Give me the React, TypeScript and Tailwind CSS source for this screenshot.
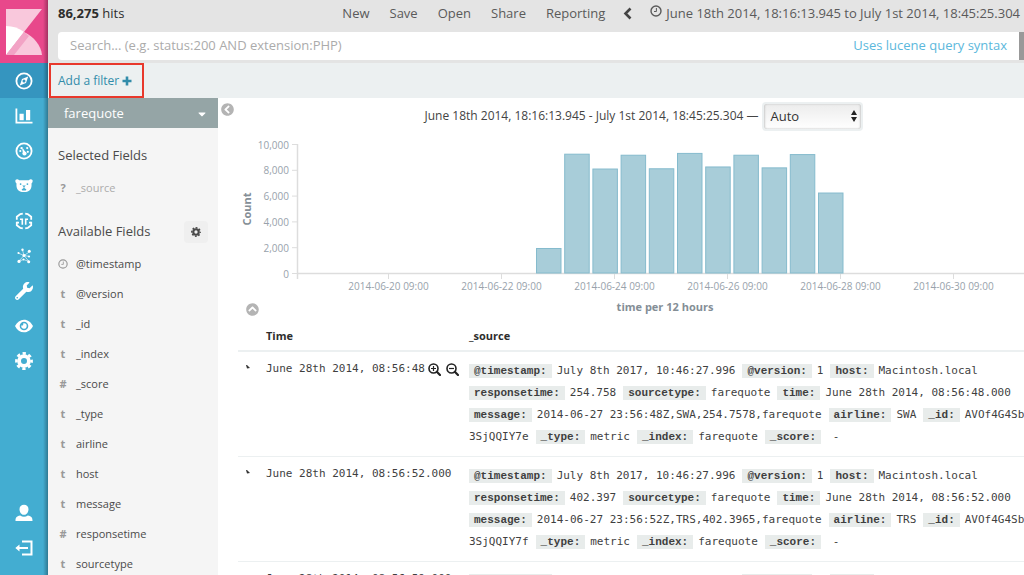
import type { ReactNode } from "react";
import { FaCaretDown, FaChevronCircleLeft, FaChevronCircleUp, FaSearch, FaWrench } from "react-icons/fa";

function Gear({ className }: { className: string }) {
  return (
    <svg viewBox="0 0 18 18" className={className} fill="none" stroke="currentColor">
      <circle cx="9" cy="9" r="4.900" strokeWidth="3.800" />
      <circle cx="9" cy="9" r="7.600" strokeWidth="2.600" strokeDasharray="3.300 2.669" strokeDashoffset="1.650" />
    </svg>
  );
}

const navItems: { label: string; icon: ReactNode }[] = [
  {
    label: "Discover",
    icon: (
      <>
        <circle cx="9" cy="9" r="7.600" fill="none" stroke="currentColor" strokeWidth="1.800" />
        <path fillRule="evenodd" d="M13.200 4.600 11 11l-6.200 2.400L7 7.100zM9 7.600a1.500 1.500 0 1 0 0 3 1.500 1.500 0 0 0 0-3z" />
      </>
    ),
  },
  {
    label: "Visualize",
    icon: <path d="M.5 1.500h1.800v13.200H17.500v1.800H.5zM4.500 6.800h4.200v6.400H4.500zM11 3h4.200v10.200H11z" />,
  },
  {
    label: "Dashboard",
    icon: (
      <>
        <circle cx="9" cy="9" r="7.600" fill="none" stroke="currentColor" strokeWidth="1.800" />
        <circle cx="5.300" cy="9" r="1.100" />
        <circle cx="6.600" cy="6.100" r="1.200" />
        <circle cx="12.200" cy="6.100" r="1.100" />
        <circle cx="12.800" cy="9.800" r="1.100" />
        <circle cx="9.500" cy="11.500" r="2.100" />
        <path d="m8 11.500-.8-4.500 1-.2 2.600 4z" />
      </>
    ),
  },
  {
    label: "Timelion",
    icon: (
      <path
        fillRule="evenodd"
        d="M.5 3c1-.9 2.500-.9 3.700.2h9.600c1.200-1.100 2.700-1.100 3.700-.2.400 1.400 0 2.600-1 3.400.5 5-1.500 8.600-7.500 8.600S1 11.400 1.500 6.400C.5 5.600.1 4.400.5 3zM5.600 6.200a.9.900 0 1 0 0 1.800.9.900 0 0 0 0-1.800zm6.800 0a.9.900 0 1 0 0 1.800.9.900 0 0 0 0-1.800zM7.200 8.600 8.600 10v1l-2 1.500.7.900h3.400l.7-.9-2-1.500v-1l1.400-1.400z"
      />
    ),
  },
  {
    label: "Machine Learning",
    icon: (
      <g fill="none" stroke="currentColor" strokeWidth="1.800">
        <path d="M7.800 1.600 5.300 2 1.800 4.800v3M1.800 9.800v3.400L5.300 16l2.500.4M10.200 1.600l2.500.4 3.500 2.800v3M16.200 9.800v3.400L12.700 16l-2.500.4" />
        <path d="M7.300 12.800V6.500M7.500 7.300H5M10.700 12.800V6.500M10.500 7.300H13M1.800 10.600H4M16.200 10.600H14" strokeWidth="1.600" />
      </g>
    ),
  },
  {
    label: "Graph",
    icon: (
      <>
        <path d="M7.500 3 9 8.500l6-4M9 8.500l5.500 1M9 8.500 3 6M9 8.500l-5.500 6M9 8.500l5 6M3.500 14.500l5-2 5.500 2" fill="none" stroke="currentColor" strokeWidth=".6" />
        <circle cx="7.500" cy="2.800" r="1.200" />
        <circle cx="9" cy="8.500" r="1.500" />
        <circle cx="14.300" cy="4.300" r="1.500" />
        <circle cx="3.500" cy="6" r="1.100" />
        <circle cx="14" cy="9.500" r="1.100" />
        <circle cx="4" cy="14.400" r="1.600" />
        <circle cx="8.500" cy="12.500" r="1" />
        <circle cx="13.700" cy="14.700" r="1.500" />
      </>
    ),
  },
  { label: "Dev Tools", icon: <FaWrench size={18} /> },
  {
    label: "Monitoring",
    icon: (
      <path
        fillRule="evenodd"
        d="M0 9c2-4 5.200-6.300 9-6.300S16 5 18 9c-2 4-5.200 6.300-9 6.300S2 13 0 9zm9-4.300a4.300 4.300 0 1 0 0 8.600 4.300 4.300 0 0 0 0-8.600zm0 1.600a2.700 2.700 0 1 1-2.600 2c.8.700 2.200.1 1.800-1.900.3-.1.500-.1.800-.1z"
      />
    ),
  },
  { label: "Management", icon: <Gear className="size-[18px]" /> },
];

const accountItems: { label: string; icon: ReactNode }[] = [
  {
    label: "Account",
    icon: (
      <path d="M9 .8c2.700 0 4.500 1.700 4.500 4.400 0 2.900-1.800 5.600-4.500 5.600S4.500 8.100 4.500 5.200C4.500 2.500 6.300.8 9 .8zM.5 17c0-3.700.8-4.700 4.700-5.600 2.300 1.700 5.300 1.700 7.600 0 3.900.9 4.700 1.900 4.700 5.600z" />
    ),
  },
  {
    label: "Logout",
    icon: <path d="M7 1.500h10.500v15H7v-2h8.500v-11H7zM4.500 5.500V8H13v2H4.500v2.500L.3 9z" />,
  },
];

const menu = ["New", "Save", "Open", "Share", "Reporting"];

const fields = [
  { type: "clock", name: "@timestamp" },
  { type: "t", name: "@version" },
  { type: "t", name: "_id" },
  { type: "t", name: "_index" },
  { type: "#", name: "_score" },
  { type: "t", name: "_type" },
  { type: "t", name: "airline" },
  { type: "t", name: "host" },
  { type: "t", name: "message" },
  { type: "#", name: "responsetime" },
  { type: "t", name: "sourcetype" },
];

const counts = [1900, 9210, 8060, 9130, 8080, 9270, 8220, 9130, 8150, 9180, 6200];
const yTicks = [0, 2000, 4000, 6000, 8000, 10000];
const xTicks = ["06-20", "06-22", "06-24", "06-26", "06-28", "06-30"];

const hits = [
  { time: "08:56:48", gmt: "23:56:48Z", response: "254.758", value: "254.7578", airline: "SWA", id: "3SjQQIY7e", active: true },
  { time: "08:56:52", gmt: "23:56:52Z", response: "402.397", value: "402.3965", airline: "TRS", id: "3SjQQIY7f", active: false },
  { time: "08:56:59", gmt: "23:56:59Z", response: "118.204", value: "118.2041", airline: "SWA", id: "3SjQQIY7g", active: false },
];

function Clock({ className }: { className: string }) {
  return (
    <svg viewBox="0 0 12 12" className={className} fill="none" stroke="currentColor">
      <circle cx="6" cy="6" r="5" strokeWidth="1.400" />
      <path d="M6.400 3v3.500H4" strokeWidth="1" />
    </svg>
  );
}

function Magnifier({ plus }: { plus?: boolean }) {
  return (
    <svg viewBox="0 0 13 13" className="size-[13px]" fill="none" stroke="currentColor">
      <circle cx="5.500" cy="5.500" r="4.500" strokeWidth="1.600" />
      <path d="m8.800 8.800 3.200 3.200" strokeWidth="2.200" strokeLinecap="round" />
      <path d={plus ? "M3 5.500h5M5.500 3v5" : "M3 5.500h5"} strokeWidth="1.200" />
    </svg>
  );
}

function NavButton({ label, icon, active }: { label: string; icon: ReactNode; active?: boolean }) {
  return (
    <a
      href="#"
      aria-label={label}
      className={`flex h-[35px] items-center justify-center text-white ${active ? "bg-[#3595bf]" : ""}`}
    >
      <svg viewBox="0 0 18 18" className="size-[18px]" fill="currentColor">
        {icon}
      </svg>
    </a>
  );
}

function SideNav() {
  return (
    <nav className="relative flex w-12 shrink-0 flex-col bg-[#43add1]">
      <a href="#" aria-label="Kibana" className="flex h-[63px] items-center justify-center bg-[#e8488b]">
        <svg viewBox="0 0 36 46" className="h-[46px] w-9">
          <path d="M0 0h36L0 46z" fill="#f9c8dc" />
          <path d="M0 17c7 0 13 2 18 6L0 46z" fill="#fff" />
          <path d="M18 23c10 5 17 13 18 23H0z" fill="#f9c8dc" />
          <path d="m18 23 5 4L8 46H0z" fill="#f2a3c5" />
        </svg>
      </a>
      {navItems.map((item, i) => (
        <NavButton key={item.label} {...item} active={i === 0} />
      ))}
      <div className="mt-auto pb-[10px]">
        {accountItems.map((item) => (
          <NavButton key={item.label} {...item} />
        ))}
      </div>
      <div className="pointer-events-none absolute inset-y-0 right-0 w-[5px] bg-linear-to-r from-transparent to-black/30" />
    </nav>
  );
}

function TopBar() {
  return (
    <header className="bg-[#e4e4e4] px-[10px] pb-[3px] text-[13px]">
      <div className="flex h-8 items-center justify-between pb-[5px] text-[#5a5a5a]">
        <div className="text-[#2d2d2d]">
          <strong className="font-bold">86,275</strong> hits
        </div>
        <div className="flex items-center pr-5">
          <div className="flex gap-5">
            {menu.map((item) => (
              <button key={item} type="button">
                {item}
              </button>
            ))}
          </div>
          <button type="button" aria-label="Previous period" className="px-[18px]">
            <svg viewBox="0 0 9 13" className="h-[13px] w-[9px]" fill="none" stroke="#444" strokeWidth="2.600">
              <path d="M7.500 1.500 2.500 6.500l5 5" />
            </svg>
          </button>
          <button type="button" className="flex items-center gap-1">
            <Clock className="mb-1.5 size-3" />
            June 18th 2014, 18:16:13.945 to July 1st 2014, 18:45:25.304
          </button>
        </div>
      </div>
      <form className="flex h-7">
        <div className="flex flex-1 items-center rounded-l bg-white px-3">
          <input
            aria-label="Search"
            placeholder="Search... (e.g. status:200 AND extension:PHP)"
            className="min-w-0 flex-1 outline-none placeholder:text-[#ababab]"
          />
          <a href="#" className="text-[#5bb8dc]">
            Uses lucene query syntax
          </a>
        </div>
        <button type="button" aria-label="Run search" className="flex w-[21px] items-center justify-center bg-[#999] text-white">
          <FaSearch size={10} />
        </button>
      </form>
    </header>
  );
}

function FieldSidebar() {
  return (
    <aside className="w-[170px] shrink-0 bg-[#f5f5f5] text-[#4a4a4a]">
      <button type="button" className="flex h-[30px] w-full items-center justify-between bg-[#95a5a6] pt-[2px] pr-[10px] pl-4 text-[13px] text-white">
        farequote
        <FaCaretDown size={12} />
      </button>
      <h2 className="mt-[17px] pl-[10px] text-[13px] leading-5">Selected Fields</h2>
      <div className="mt-[13px] flex h-[21px] items-center pl-[10px] text-[11px] text-[#acacac]">
        <span className="w-[10px] text-center font-bold text-[#999]">?</span>
        <span className="ml-2">_source</span>
      </div>
      <div className="mt-[22px] flex items-start justify-between pr-[10px] pl-[10px]">
        <h2 className="text-[13px] leading-5">Available Fields</h2>
        <button type="button" aria-label="Field settings" className="flex h-[22px] w-6 items-center justify-center rounded bg-[#efefef]">
          <Gear className="size-[10px]" />
        </button>
      </div>
      <ul className="mt-[6px] text-[11px]">
        {fields.map((field) => (
          <li key={field.name} className="flex h-[30px] items-center pl-[10px]">
            <span className="w-[10px] text-center font-bold text-[#999]">
              {field.type === "clock" ? <Clock className="size-[10px]" /> : field.type}
            </span>
            <span className="ml-2">{field.name}</span>
          </li>
        ))}
      </ul>
    </aside>
  );
}

function Histogram() {
  const x0 = 59;
  const y0 = 136;
  return (
    <svg viewBox="0 0 812 180" className="h-[180px] w-[812px]" fontSize="10" fill="#98a2ab">
      <g stroke="#ddd" strokeWidth="1">
        <path d={`M${x0 + 0.5} 6v135M${x0} ${y0 - 0.5}H796`} fill="none" strokeWidth="1.500" />
        {yTicks.map((tick) => (
          <path key={tick} d={`M${x0 - 5} ${y0 - 0.5 - tick * 0.0129}h5`} />
        ))}
        {xTicks.map((tick, i) => (
          <path key={tick} d={`M${150.5 + i * 113} ${y0}v5`} />
        ))}
      </g>
      {yTicks.map((tick) => (
        <text key={tick} x="51" y={y0 + 3.5 - tick * 0.0129} textAnchor="end">
          {tick.toLocaleString("en-US")}
        </text>
      ))}
      {xTicks.map((tick, i) => (
        <text key={tick} x={150.5 + i * 113} y="152" textAnchor="middle">
          2014-{tick} 09:00
        </text>
      ))}
      {counts.map((count, i) => (
        <rect
          key={i}
          x={298.5 + i * 28.2}
          y={y0 - 1 - count * 0.0129}
          width="24.500"
          height={count * 0.0129}
          fill="#a8cdd9"
          stroke="#85bbcd"
        />
      ))}
      <g fontSize="11" fontWeight="700" fill="#848e96">
        <text x="427" y="173" textAnchor="middle">
          time per 12 hours
        </text>
        <text transform="translate(13 71) rotate(-90)" textAnchor="middle">
          Count
        </text>
      </g>
    </svg>
  );
}

function SourceLine({ pairs, lead }: { pairs: [string, string][]; lead?: string }) {
  return (
    <div className="flex gap-[7px] whitespace-nowrap">
      {lead && <span>{lead}</span>}
      {pairs.map(([key, value]) => (
        <span key={key} className="flex items-center gap-[5px]">
          <b className="bg-[#e8eceb] px-[5px] font-['Liberation_Mono',monospace] leading-[14px]">{key}:</b>
          {value}
        </span>
      ))}
    </div>
  );
}

function DocTable() {
  return (
    <table className="w-full table-fixed border-collapse text-[11px] text-[#3f3f3f]">
      <thead>
        <tr className="border-b-2 border-[#ecf0f1] text-left text-[#2d2d2d]">
          <th className="w-7" />
          <th className="h-[33px] w-[203px] pt-1 font-bold">Time</th>
          <th className="pt-1 font-bold">_source</th>
        </tr>
      </thead>
      <tbody className="align-top font-['DejaVu_Sans_Mono',monospace] leading-[22px]">
        {hits.map((hit) => (
          <tr key={hit.time} className="border-b border-[#ecf0f1]">
            <td className="pt-[13px] pl-2">
              <button type="button" aria-label="Toggle row" className="block">
                <svg viewBox="0 0 4 4" className="size-1" fill="#333">
                  <path d="M0 0h1l3 3-3 .5z" />
                </svg>
              </button>
            </td>
            <td className="pt-[6px]">
              <div className="flex items-center whitespace-nowrap">
                June 28th 2014, {hit.time}
                {hit.active ? (
                  <span className="flex gap-[5px] pl-[3px] text-[#222]">
                    <button type="button" aria-label="Filter for value">
                      <Magnifier plus />
                    </button>
                    <button type="button" aria-label="Filter out value">
                      <Magnifier />
                    </button>
                  </span>
                ) : (
                  ".000"
                )}
              </div>
            </td>
            <td className="py-2">
              <SourceLine
                pairs={[
                  ["@timestamp", "July 8th 2017, 10:46:27.996"],
                  ["@version", "1"],
                  ["host", "Macintosh.local"],
                ]}
              />
              <SourceLine
                pairs={[
                  ["responsetime", hit.response],
                  ["sourcetype", "farequote"],
                  ["time", `June 28th 2014, ${hit.time}.000`],
                ]}
              />
              <SourceLine
                pairs={[
                  ["message", `2014-06-27 ${hit.gmt},${hit.airline},${hit.value},farequote`],
                  ["airline", hit.airline],
                  ["_id", "AVOf4G4Sb"],
                ]}
              />
              <SourceLine
                lead={hit.id}
                pairs={[
                  ["_type", "metric"],
                  ["_index", "farequote"],
                  ["_score", "\u00a0-"],
                ]}
              />
            </td>
          </tr>
        ))}
      </tbody>
    </table>
  );
}

export default function App() {
  return (
    <div className="flex h-screen overflow-hidden bg-white font-['Open_Sans',sans-serif]">
      <SideNav />
      <div className="min-w-0 flex-1 overflow-hidden">
        <div className="min-w-[1002px]">
          <TopBar />
          <div className="flex h-[35px] bg-[#ecf0f1]">
            <button type="button" className="ml-px flex items-center gap-[3px] border-2 border-[#e8382c] pr-[10px] pl-[7px] text-xs text-[#328caa]">
              Add a filter
              <svg viewBox="0 0 10 10" className="size-[10px]" fill="none" stroke="currentColor" strokeWidth="2.600">
                <path d="M5 .5v9M.5 5h9" />
              </svg>
            </button>
          </div>
          <div className="flex">
            <FieldSidebar />
            <main className="relative flex-1 pl-5">
              <button type="button" aria-label="Collapse sidebar" className="absolute top-[5px] left-[3px] text-[#b4b4b4]">
                <FaChevronCircleLeft size={13} />
              </button>
              <div className="flex h-10 items-start justify-center gap-1 pt-1 text-xs text-[#444]">
                <label htmlFor="interval" className="leading-[27px]">
                  June 18th 2014, 18:16:13.945 - July 1st 2014, 18:45:25.304 —
                </label>
                <div className="relative">
                  <select
                    id="interval"
                    className="h-[29px] w-[101px] appearance-none rounded border-2 border-[#ecf0f1] bg-linear-to-b from-[#ececec] to-white pl-[6px] text-[13px] text-[#333] shadow-[inset_1px_0_2px_#ccc,inset_-1px_0_2px_#ccc]"
                  >
                    <option>Auto</option>
                  </select>
                  <svg viewBox="0 0 6 12" className="pointer-events-none absolute top-2 right-[6px] h-3 w-1.5" fill="#222">
                    <path d="m3 0 3 5H0zM0 7h6l-3 5z" />
                  </svg>
                </div>
              </div>
              <div className="relative">
                <Histogram />
                <button type="button" aria-label="Collapse chart" className="absolute bottom-[2px] left-2 text-[#b4b4b4]">
                  <FaChevronCircleUp size={13} />
                </button>
              </div>
              <DocTable />
            </main>
          </div>
        </div>
      </div>
    </div>
  );
}
